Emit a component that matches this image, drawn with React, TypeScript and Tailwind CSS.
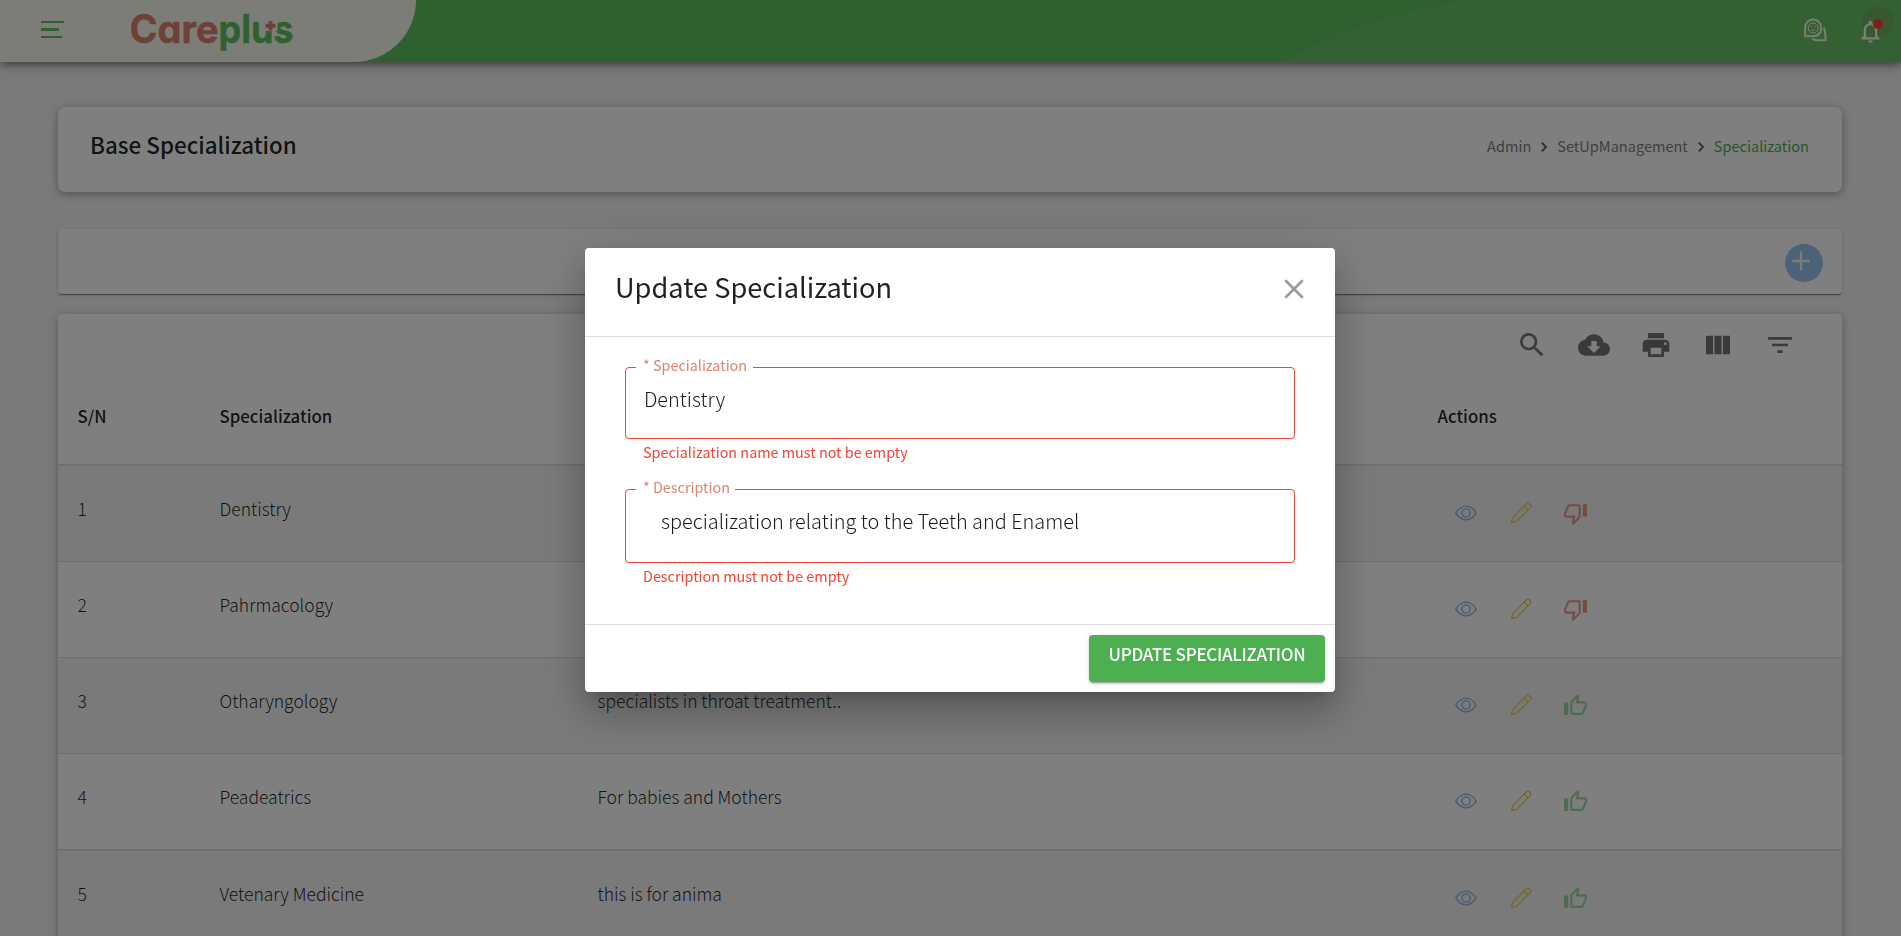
import React from "react";
import { MdSearch, MdCloudDownload, MdPrint, MdViewColumn, MdFilterList, MdNotificationsNone } from "react-icons/md";
import { BsEye } from "react-icons/bs";

type Row = { id: number; name: string; description?: string; active: boolean };

const rows: Row[] = [
  { id: 1, name: "Dentistry", active: false },
  { id: 2, name: "Pahrmacology", active: false },
  { id: 3, name: "Otharyngology", description: "specialists in throat treatment..", active: true },
  { id: 4, name: "Peadeatrics", description: "For babies and Mothers", active: true },
  { id: 5, name: "Vetenary Medicine", description: "this is for anima", active: true },
];

const columns = "grid grid-cols-[142px_378px_840px_1fr] pl-[19.5px]";

function Pencil() {
  return (
    <svg className="size-[22px]" viewBox="0 0 22 22" fill="none" stroke="currentColor" strokeWidth="1.3" strokeLinejoin="round">
      <path d="M1.5 20.5 2.6 15.6 15.6 2.5C17 1.1 18.6 1.1 19.8 2.2 21 3.4 21 5 19.6 6.4L6.5 19.4Z" />
      <path d="M14 4.1 18 8" />
    </svg>
  );
}

function Thumb({ up }: { up: boolean }) {
  return (
    <svg className="size-[25px]" viewBox="0 0 24 24" fill="currentColor">
      {up ? (
        <path d="M9 21h9c.83 0 1.54-.5 1.84-1.22l3.02-7.05c.09-.23.14-.47.14-.73v-2c0-1.1-.9-2-2-2h-6.31l.95-4.57.03-.32c0-.41-.17-.79-.44-1.06L14.17 1 7.58 7.59C7.22 7.95 7 8.45 7 9v10c0 1.1.9 2 2 2zM9 9l4.34-4.34L12 10h9v2l-3 7H9V9zM1 9h4v12H1z" />
      ) : (
        <path d="M15 3H6c-.83 0-1.54.5-1.84 1.22l-3.02 7.05c-.09.23-.14.47-.14.73v2c0 1.1.9 2 2 2h6.31l-.95 4.57-.03.32c0 .41.17.79.44 1.06L9.83 23l6.59-6.59c.36-.36.58-.86.58-1.41V5c0-1.1-.9-2-2-2zm0 12l-4.34 4.34L12 14H3v-2l3-7h9v10zm4-12h4v12h-4z" />
      )}
    </svg>
  );
}

function Logo() {
  return (
    <svg className="h-[62px] w-[170px]" viewBox="0 -8 170 62">
      <g className="font-[Inter,sans-serif] text-[39px] font-bold [font-feature-settings:'cv11']" strokeWidth="0.5">
        <text x="-1.5" y="34.7" textLength="89" lengthAdjust="spacingAndGlyphs" fill="#dd8370" stroke="#dd8370">Care</text>
        <text x="87.500" y="34.7" textLength="75" lengthAdjust="spacingAndGlyphs" fill="#5cc25e" stroke="#5cc25e">plus</text>
      </g>
      <path d="M133.500 10h13v13h-13z" fill="#fbfbf0" />
      <path d="M139.500 13v9.500M134.500 17.800h10" stroke="#dd8370" strokeWidth="4" />
    </svg>
  );
}

function Header() {
  return (
    <header className="relative flex h-[62px] shrink-0 items-center justify-between bg-[#5cc25e] shadow-[0_2px_10px_rgba(0,0,0,0.6)]">
      <svg className="absolute right-0 top-0 h-[62px] w-[618px]" viewBox="0 0 618 62">
        <path d="M0 62Q75 18 183 0H618V62Z" fill="#66c266" />
        <circle cx="595" cy="22" r="16" fill="#70b35f" />
      </svg>
      <div className="relative flex h-full w-[416px] items-start rounded-br-[62px] bg-[#fbfbf0] pl-[41px]">
        <div className="mt-[21px] flex w-[90px] flex-col gap-[5px]">
          <span className="h-[2px] w-[23px] bg-[#5cc25e]" />
          <span className="h-[3px] w-[18px] bg-[#5cc25e]" />
          <span className="h-[2px] w-[21px] bg-[#5cc25e]" />
        </div>
        <Logo />
      </div>
      <div className="relative flex items-center gap-[30px] pr-[17px] text-[#fbfbf0]">
        <svg className="mb-[2px] size-6" viewBox="0 0 24 24" fill="none" stroke="currentColor" strokeWidth="2">
          <path d="M2.100 18.300V10C2.100 5 5.500 1.500 10 1.500S18.300 5 18.300 10 14.800 18.300 10.500 18.300Z" />
          <circle cx="10.200" cy="10" r="5" strokeWidth="1" />
          <path d="M8 8.700h1.300M11.200 8.700h1.300M8.500 12.200q1.700-1.400 3.400 0" strokeWidth="1" />
          <path d="M20.600 9.500C22.500 13 22.600 17 22.600 22.300H14C12 22.300 10.500 21.700 9.300 20.700" />
        </svg>
        <div className="relative">
          <MdNotificationsNone className="size-[27px]" />
          <span className="absolute right-[1px] top-[1px] size-[10px] rounded-full bg-[#ff3e35]" />
        </div>
      </div>
    </header>
  );
}

function Chevron() {
  return (
    <svg className="mx-[10px] mt-[1px] h-[10px] w-[6px]" viewBox="0 0 6 10" fill="none" stroke="#4b5563" strokeWidth="1.700">
      <path d="M.7.700 5 5 .7 9.300" />
    </svg>
  );
}

function Field({ label, value, error, box, notch, indent }: { label: string; value: string; error: string; box: string; notch: string; indent: string }) {
  return (
    <div>
      <div className={`relative rounded border border-[#f44336] pt-[14px] ${box}`}>
        <span className={`absolute left-[10px] top-[-14px] h-[22px] bg-white pl-[7px] text-[14.4px] leading-[22px] text-[#dd8370] ${notch}`}>{label}</span>
        <div className={`text-[19.9px] font-light leading-[34px] text-black/90 ${indent}`}>{value}</div>
      </div>
      <div className="ml-[18px] text-[14.4px] leading-[26px] text-[#f44336]">{error}</div>
    </div>
  );
}

function UpdateDialog() {
  return (
    <div className="fixed inset-0 flex items-center justify-center bg-black/50 pl-[19px] pt-1">
      <div role="dialog" className="flex h-[444px] w-[750px] flex-col rounded bg-white shadow-[0_11px_15px_-7px_rgba(0,0,0,0.2),0_24px_38px_3px_rgba(0,0,0,0.14),0_9px_46px_8px_rgba(0,0,0,0.12)]">
        <div className="flex h-[89px] items-start justify-between border-b border-[#dedede] pl-[30px] pr-8 pt-[18px]">
          <h2 className="text-[27.2px] leading-[40px] text-black/87">Update Specialization</h2>
          <svg className="mt-[14px] size-[18px] overflow-visible" viewBox="0 0 18 18" stroke="#9b9b9b" strokeWidth="2.600" strokeLinecap="round">
            <path d="M1 1 17 17M17 1 1 17" />
          </svg>
        </div>
        <div className="flex flex-1 flex-col gap-6 px-10 pt-[30px]">
          <Field label="* Specialization" value="Dentistry" error="Specialization name must not be empty" box="h-[72px]" notch="w-[117px]" indent="pl-[18px]" />
          <Field label="* Description" value="specialization relating to the Teeth and Enamel" error="Description must not be empty" box="h-[74px]" notch="w-[99px]" indent="pl-[35px]" />
        </div>
        <div className="flex h-[68px] justify-end border-t border-[#dedede] pr-[10px] pt-[10px]">
          <button className="flex h-[47px] w-[236px] justify-center rounded bg-[#4caf50] pt-[5px] text-[17px] font-medium leading-[28px] tracking-[-0.27px] text-white shadow-[0_3px_1px_-2px_rgba(0,0,0,0.2),0_2px_2px_rgba(0,0,0,0.14),0_1px_5px_rgba(0,0,0,0.12)]">UPDATE SPECIALIZATION</button>
        </div>
      </div>
    </div>
  );
}

export default function App() {
  return (
    <div className="flex h-screen flex-col overflow-hidden bg-[#f4f4f4] font-['Noto_Sans_CJK_TC',sans-serif] text-black/87">
      <Header />
      <main className="flex flex-1 flex-col pl-[58px] pr-[59px] pt-[45px]">
        <section className="flex h-[85px] shrink-0 items-start justify-between rounded-[7px] bg-white pl-8 pr-[33px] pt-[20px] shadow-[0_2px_8px_rgba(0,0,0,0.35)]">
          <h1 className="text-[22.4px] font-medium leading-[34px]">Base Specialization</h1>
          <nav className="mt-[6px] flex items-center text-[14.55px] leading-[26px] text-[#808080]">
            <span>Admin</span><Chevron /><span>SetUpManagement</span><Chevron /><span className="text-[#4caf50]">Specialization</span>
          </nav>
        </section>
        <section className="mt-[37px] flex h-[65px] shrink-0 items-center justify-end rounded bg-white pr-[19px] shadow-[0_2px_1px_-1px_rgba(0,0,0,0.4),0_1px_3px_rgba(0,0,0,0.2)]">
          <button className="mt-[3px] flex size-[38px] items-center justify-center rounded-full bg-[#98c4f0]">
            <svg className="mb-[5px] mr-[6px] size-5" viewBox="0 0 20 20" stroke="#fbfbf0" strokeWidth="2.300" strokeLinecap="round"><path d="M10 1.500v17M2 10h16" /></svg>
          </button>
        </section>
        <section className="mt-5 flex-1 rounded-t bg-white shadow-[0_2px_8px_rgba(0,0,0,0.3)]">
          <div className="flex h-[63px] justify-end gap-[30px] pr-[46px] pt-[15px] text-[32px] text-[#757575]">
            <MdSearch /><MdCloudDownload /><MdPrint /><MdViewColumn /><MdFilterList />
          </div>
          <div className={`${columns} h-[89px] border-b-2 border-[#dedede] pt-[25px] text-[16.8px] font-medium leading-[28px]`}>
            <span>S/N</span><span>Specialization</span><span /><span>Actions</span>
          </div>
          {rows.map((row) => (
            <div key={row.id} className={`${columns} border-[#dedede] pt-[28px] text-[17.5px] font-light leading-[30px] ${row.id % 2 ? "bg-[#f4f4f4]" : "bg-white"} ${row.id === 4 ? "h-[97px] border-b-2" : "h-[96px] border-b"}`}>
              <span>{row.id}</span>
              <span>{row.name}</span>
              <span>{row.description}</span>
              <div className="flex h-[38px] items-center pl-[17px]">
                <BsEye className="size-[22px] text-[#90b4ec]" />
                <span className="ml-[33px] text-[#f0cf42]"><Pencil /></span>
                <span className={`ml-[31px] ${row.active ? "text-[#98d8a2]" : "text-[#ea9884]"}`}><Thumb up={row.active} /></span>
              </div>
            </div>
          ))}
        </section>
      </main>
      <UpdateDialog />
    </div>
  );
}
